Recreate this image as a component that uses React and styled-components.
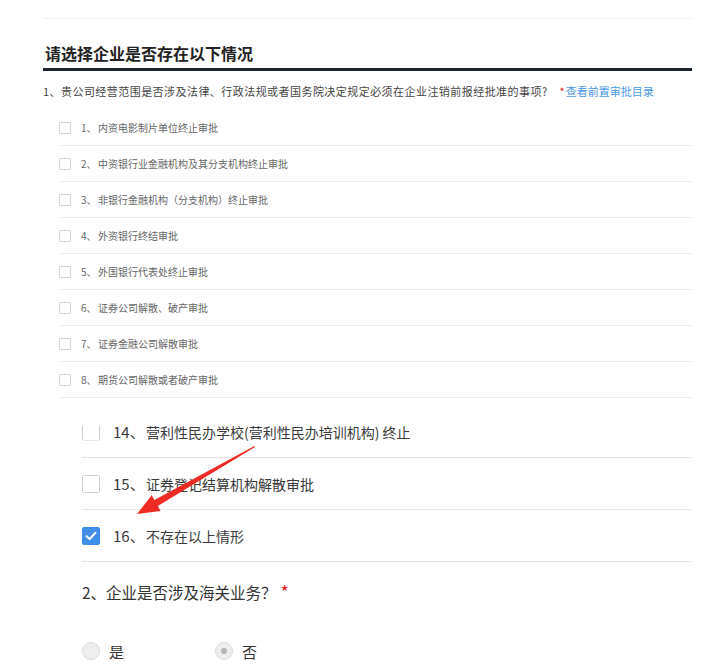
import React from "react";
import styled, { createGlobalStyle } from "styled-components";

const GlobalStyle = createGlobalStyle`
  html, body {
    margin: 0;
    padding: 0;
    background: #fff;
  }
  body {
    font-family: "Noto Sans CJK SC", "Liberation Sans", sans-serif;
    color: #333;
  }
`;

const Page = styled.div`
  position: relative;
  width: 717px;
  height: 672px;
  overflow: hidden;
  padding-top: 18px;
  box-sizing: border-box;
`;

const UpperSection = styled.section`
  margin-left: 43px;
  width: 649px;
  border-top: 1px dotted #e2e2e2;
`;

const Heading = styled.h2`
  margin: 23px 0 0;
  padding: 0 0 4px 2px;
  font-size: 16px;
  line-height: 22px;
  font-weight: 700;
  color: #222;
  border-bottom: 3px solid #1c2430;
`;

const Question = styled.p`
  margin: 12px 0 11px;
  font-size: 11px;
  line-height: 16px;
  color: #444;
`;

const QuestionText = styled.span`
  letter-spacing: 0.45px;
`;

const Star = styled.span`
  color: #e02424;
  margin-left: ${p => p.$gap || 0}px;
  font-size: ${p => p.$size || "inherit"};
`;

const Link = styled.a`
  color: #4a9ae6;
  text-decoration: none;
  margin-left: 1px;
`;

const SmallList = styled.ul`
  list-style: none;
  margin: 0 0 0 16px;
  padding: 0;
`;

const SmallRow = styled.li`
  display: flex;
  align-items: center;
  height: 35px;
  border-bottom: 1px solid #ececec;
  font-size: 10px;
  color: #666;
`;

const SmallBox = styled.span`
  width: 12px;
  height: 12px;
  box-sizing: border-box;
  border: 1px solid #d4d4d4;
  border-radius: 1px;
  margin-right: 10px;
  flex: none;
`;

const SmallNum = styled.span`
  width: 17px;
  flex: none;
`;

const LowerSection = styled.section`
  margin: 8px 0 0 82px;
  width: 610px;
`;

const BigList = styled.ul`
  list-style: none;
  margin: 0;
  padding: 0;
`;

const BigRow = styled.li`
  display: flex;
  align-items: center;
  height: 51px;
  border-bottom: 1px solid #e6e6e6;
  font-size: 14px;
  color: #3a3a3a;
`;

const BigBox = styled.span`
  width: 18px;
  height: 18px;
  box-sizing: border-box;
  border: 1px solid ${p => (p.$checked ? "#3f8ee8" : "#cfcfcf")};
  background: ${p => (p.$checked ? "#3f8ee8" : "#fff")};
  border-radius: 2px;
  margin-right: 13px;
  flex: none;
  display: flex;
  align-items: center;
  justify-content: center;
  clip-path: ${p => (p.$cutTop ? `inset(${p.$cutTop}px 0 0 0)` : "none")};
`;

const BigNum = styled.span`
  width: 33px;
  flex: none;
  font-size: 15px;
`;

const Question2 = styled.p`
  margin: 18px 0 0;
  font-size: 15.5px;
  line-height: 22px;
  color: #333;
`;

const RadioGroup = styled.div`
  display: flex;
  margin-top: 39px;
`;

const RadioItem = styled.label`
  display: flex;
  align-items: center;
  width: 133px;
  height: 18px;
  font-size: 15px;
  color: #333;
`;

const RadioDot = styled.span`
  width: 18px;
  height: 18px;
  box-sizing: border-box;
  border-radius: 50%;
  border: 1px solid #dcdcdc;
  background: #eeeeee;
  margin-right: 9px;
  display: flex;
  align-items: center;
  justify-content: center;
  &::after {
    content: "";
    display: ${p => (p.$checked ? "block" : "none")};
    width: 6px;
    height: 6px;
    border-radius: 50%;
    background: #b5b5b5;
  }
`;

const Arrow = styled.svg`
  position: absolute;
  left: 0;
  top: 0;
  pointer-events: none;
`;

const smallItems = [
  "内资电影制片单位终止审批",
  "中资银行业金融机构及其分支机构终止审批",
  "非银行金融机构（分支机构）终止审批",
  "外资银行终结审批",
  "外国银行代表处终止审批",
  "证券公司解散、破产审批",
  "证券金融公司解散审批",
  "期货公司解散或者破产审批"
];

const bigItems = [
  { num: 14, text: "营利性民办学校(营利性民办培训机构) 终止", cutTop: 3 },
  { num: 15, text: "证券登记结算机构解散审批" },
  { num: 16, text: "不存在以上情形", checked: true }
];

const Check = () => (
  <svg width="12" height="10" viewBox="0 0 12 10">
    <path
      d="M1.5 5.2 L4.6 8 L10.5 1.8"
      fill="none"
      stroke="#fff"
      strokeWidth="2"
      strokeLinecap="round"
      strokeLinejoin="round"
    />
  </svg>
);

const App = () => (
  <Page>
    <GlobalStyle />
    <UpperSection>
      <Heading>请选择企业是否存在以下情况</Heading>
      <Question>
        <QuestionText>
          1、贵公司经营范围是否涉及法律、行政法规或者国务院决定规定必须在企业注销前报经批准的事项?
        </QuestionText>
        <Star $gap={12}>*</Star>
        <Link href="#">查看前置审批目录</Link>
      </Question>
      <SmallList>
        {smallItems.map((text, i) => (
          <SmallRow key={text}>
            <SmallBox />
            <SmallNum>{i + 1}、</SmallNum>
            {text}
          </SmallRow>
        ))}
      </SmallList>
    </UpperSection>

    <LowerSection>
      <BigList>
        {bigItems.map(item => (
          <BigRow key={item.num}>
            <BigBox $checked={item.checked} $cutTop={item.cutTop}>
              {item.checked && <Check />}
            </BigBox>
            <BigNum>{item.num}、</BigNum>
            {item.text}
          </BigRow>
        ))}
      </BigList>
      <Question2>
        2、企业是否涉及海关业务？<Star $gap={4} $size="18px">*</Star>
      </Question2>
      <RadioGroup>
        <RadioItem>
          <RadioDot />是
        </RadioItem>
        <RadioItem>
          <RadioDot $checked />否
        </RadioItem>
      </RadioGroup>
    </LowerSection>

    <Arrow width="717" height="672" viewBox="0 0 717 672">
      <polygon
        points="255,447 157.8,506.1 160.5,510.9 137,514 151.7,495.3 154.4,500.1 254.4,446"
        fill="#ee2b24"
      />
    </Arrow>
  </Page>
);

export default App;
